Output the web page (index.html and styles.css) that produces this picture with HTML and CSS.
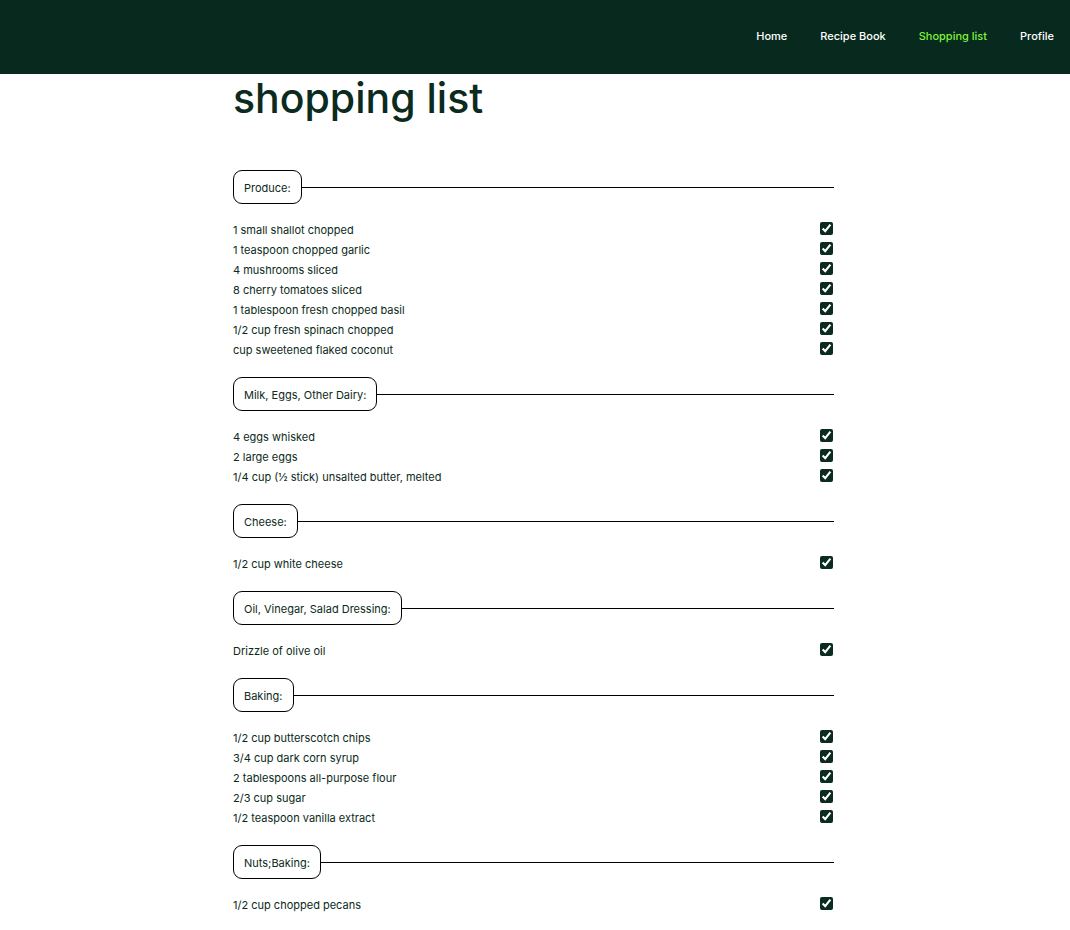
FILE: index.html
```html
<!DOCTYPE html>
<html lang="en">
<head>
<meta charset="utf-8">
<title>Shopping list</title>
<link rel="stylesheet" href="styles.css">
</head>
<body>
<header class="topbar">
  <nav class="nav">
    <a class="nav-link" href="#">Home</a>
    <a class="nav-link" href="#">Recipe Book</a>
    <a class="nav-link active" href="#">Shopping list</a>
    <a class="nav-link" href="#">Profile</a>
  </nav>
</header>
<main class="page">
  <h1 class="title">shopping list</h1>

  <section class="group">
    <div class="group-head"><span class="label">Produce:</span><span class="rule"></span></div>
    <ul class="items">
      <li class="item"><span>1 small shallot chopped</span><input type="checkbox" checked></li>
      <li class="item"><span>1 teaspoon chopped garlic</span><input type="checkbox" checked></li>
      <li class="item"><span>4 mushrooms sliced</span><input type="checkbox" checked></li>
      <li class="item"><span>8 cherry tomatoes sliced</span><input type="checkbox" checked></li>
      <li class="item"><span>1 tablespoon fresh chopped basil</span><input type="checkbox" checked></li>
      <li class="item"><span>1/2 cup fresh spinach chopped</span><input type="checkbox" checked></li>
      <li class="item"><span>cup sweetened flaked coconut</span><input type="checkbox" checked></li>
    </ul>
  </section>

  <section class="group">
    <div class="group-head"><span class="label">Milk, Eggs, Other Dairy:</span><span class="rule"></span></div>
    <ul class="items">
      <li class="item"><span>4 eggs whisked</span><input type="checkbox" checked></li>
      <li class="item"><span>2 large eggs</span><input type="checkbox" checked></li>
      <li class="item"><span>1/4 cup (½ stick) unsalted butter, melted</span><input type="checkbox" checked></li>
    </ul>
  </section>

  <section class="group">
    <div class="group-head"><span class="label">Cheese:</span><span class="rule"></span></div>
    <ul class="items">
      <li class="item"><span>1/2 cup white cheese</span><input type="checkbox" checked></li>
    </ul>
  </section>

  <section class="group">
    <div class="group-head"><span class="label">Oil, Vinegar, Salad Dressing:</span><span class="rule"></span></div>
    <ul class="items">
      <li class="item"><span>Drizzle of olive oil</span><input type="checkbox" checked></li>
    </ul>
  </section>

  <section class="group">
    <div class="group-head"><span class="label">Baking:</span><span class="rule"></span></div>
    <ul class="items">
      <li class="item"><span>1/2 cup butterscotch chips</span><input type="checkbox" checked></li>
      <li class="item"><span>3/4 cup dark corn syrup</span><input type="checkbox" checked></li>
      <li class="item"><span>2 tablespoons all-purpose flour</span><input type="checkbox" checked></li>
      <li class="item"><span>2/3 cup sugar</span><input type="checkbox" checked></li>
      <li class="item"><span>1/2 teaspoon vanilla extract</span><input type="checkbox" checked></li>
    </ul>
  </section>

  <section class="group">
    <div class="group-head"><span class="label">Nuts;Baking:</span><span class="rule"></span></div>
    <ul class="items">
      <li class="item"><span>1/2 cup chopped pecans</span><input type="checkbox" checked></li>
    </ul>
  </section>
</main>
</body>
</html>
```

FILE: styles.css
```css
* { box-sizing: border-box; }

body {
  margin: 0;
  font-family: Inter, "Open Sans", sans-serif;
  color: #0b2a20;
  background: #fff;
}

.topbar {
  height: 74px;
  background: #08291e;
  display: flex;
  align-items: center;
  justify-content: flex-end;
  padding: 0 16px 2px 0;
}

.nav {
  display: flex;
  gap: 33px;
}

.nav-link {
  color: #ffffff;
  text-decoration: none;
  font-size: 11px;
  font-weight: 500;
}

.nav-link.active {
  color: #7ef23a;
}

.page {
  width: 604px;
  margin: 0 auto;
  padding-right: 3px;
}

.title {
  margin: -1px 0 47px;
  font-size: 41px;
  line-height: 50px;
  font-weight: 500;
  color: #0b2a20;
  letter-spacing: 0;
}

.group {
  margin-bottom: 17px;
}

.group-head {
  display: flex;
  align-items: center;
  margin-bottom: 16px;
}

.label {
  height: 34px;
  display: flex;
  align-items: center;
  padding: 2px 10px 0;
  border: 1px solid #000;
  border-radius: 9px;
  font-size: 11px;
  color: #0b2a20;
}

.rule {
  flex: 1;
  height: 1px;
  background: #000;
}

.items {
  list-style: none;
  margin: 0;
  padding: 0;
}

.item {
  height: 20px;
  display: flex;
  align-items: center;
  justify-content: space-between;
  font-size: 11px;
}

.item input {
  width: 13px;
  height: 13px;
  margin: -4px 1px 0 0;
  accent-color: #0b2a20;
}
```
